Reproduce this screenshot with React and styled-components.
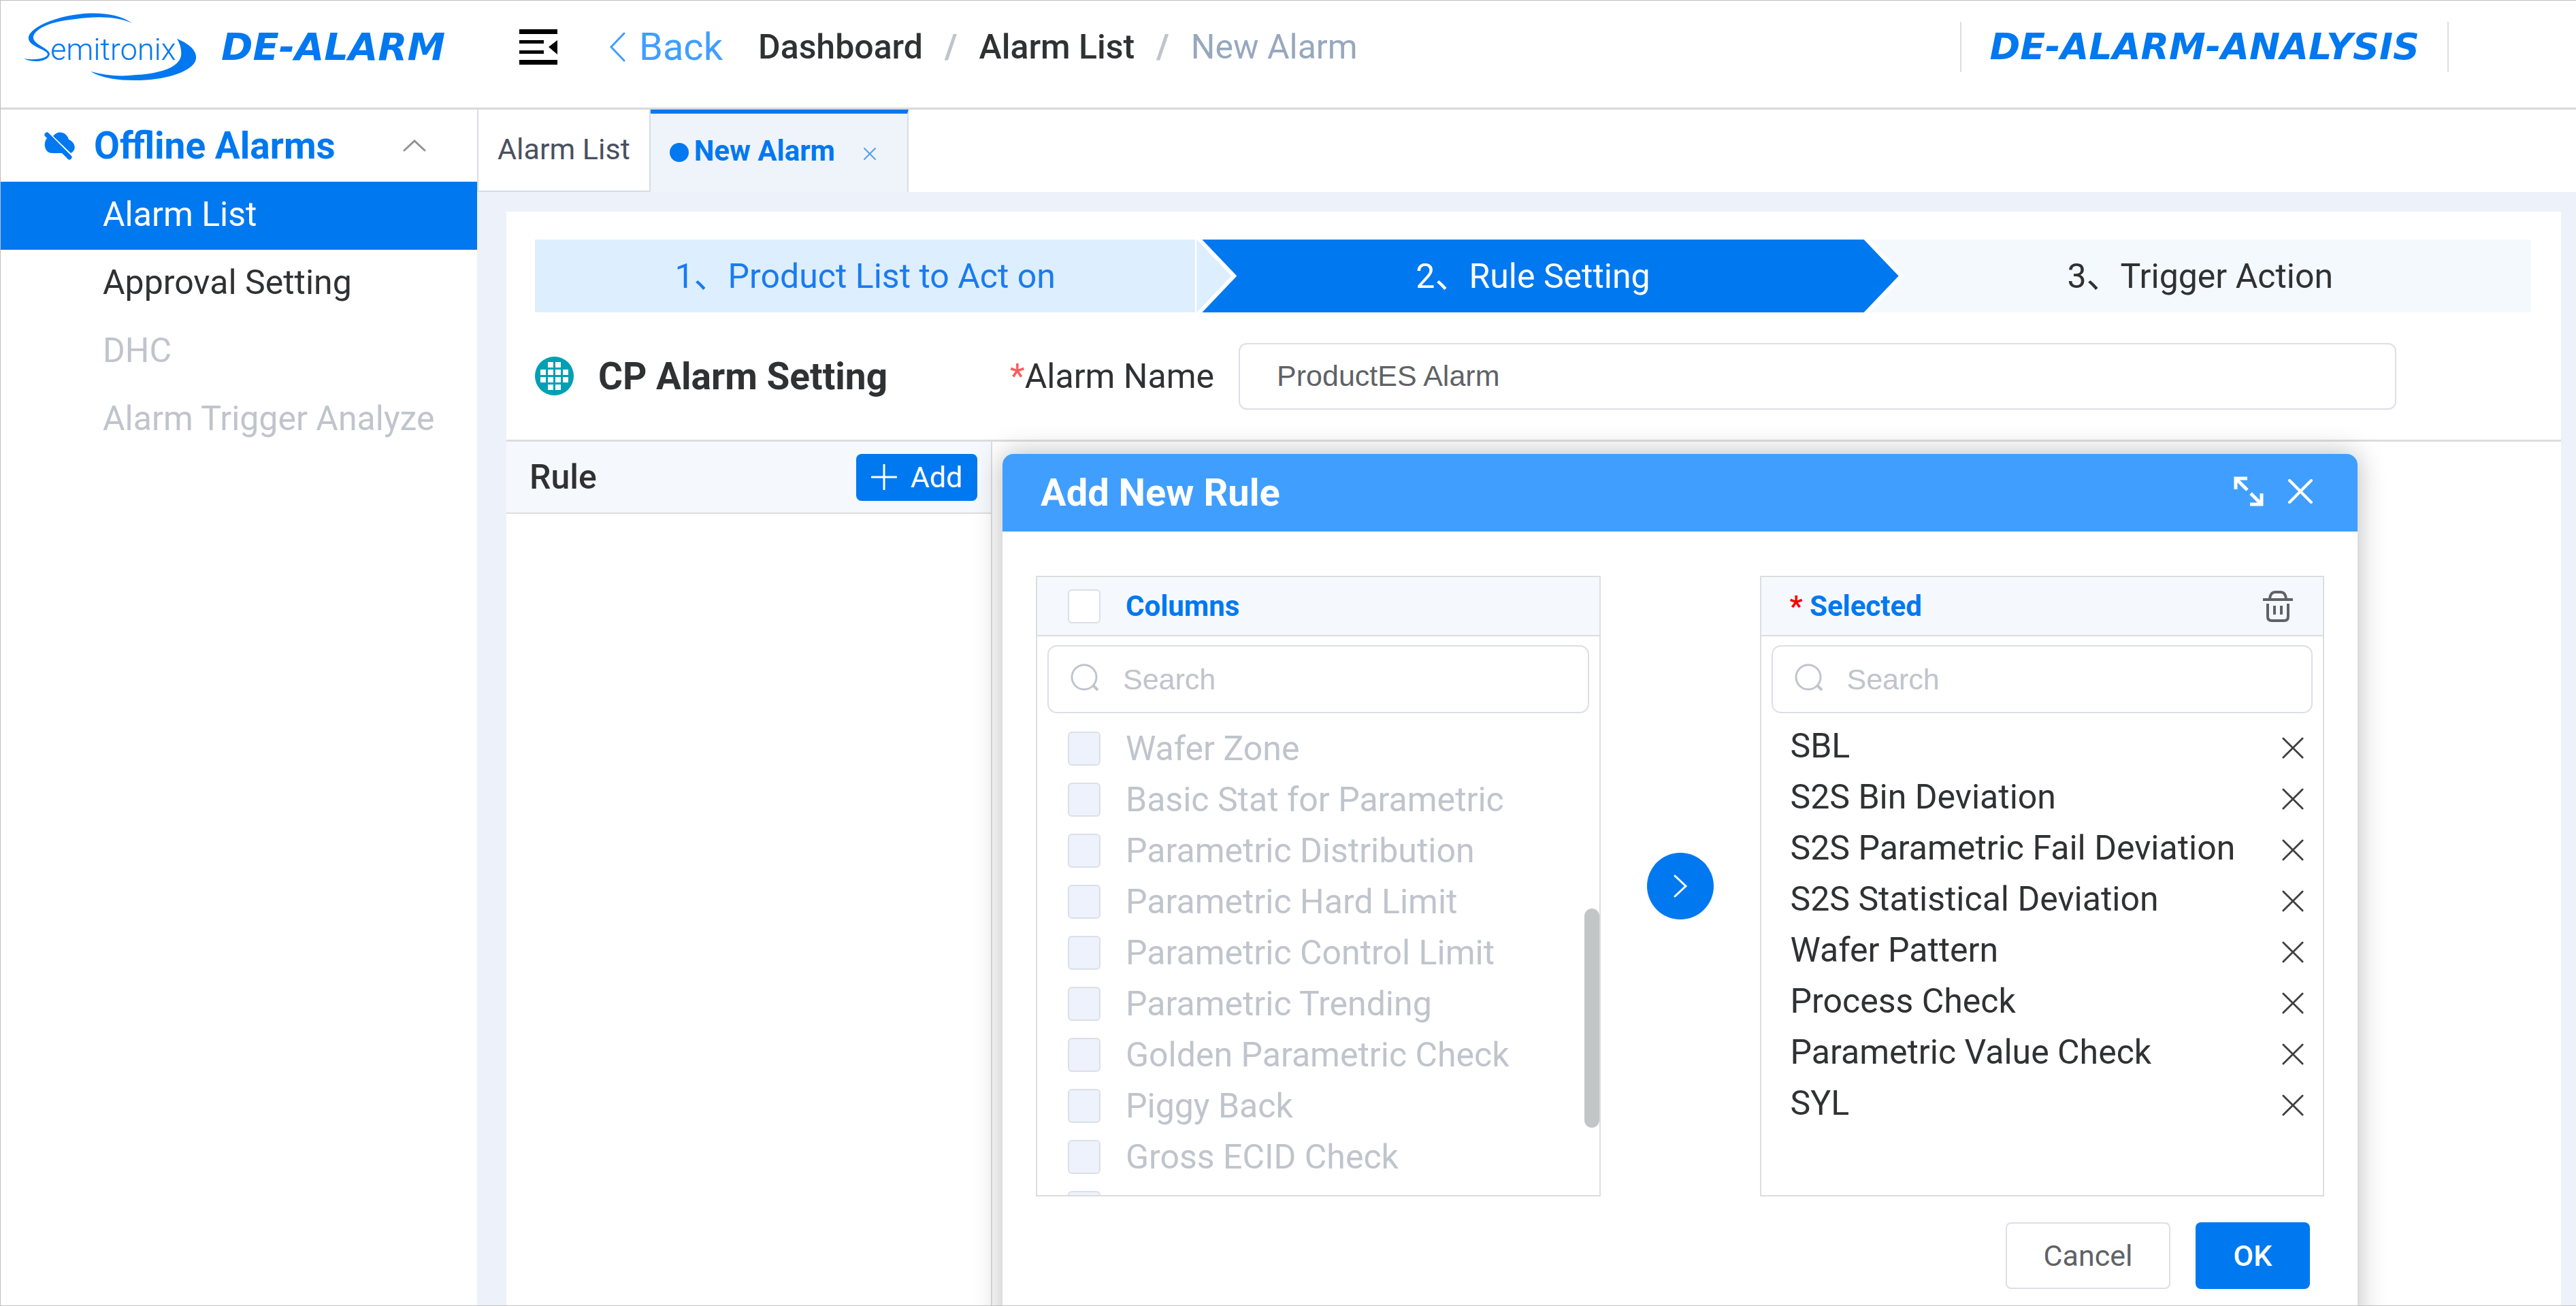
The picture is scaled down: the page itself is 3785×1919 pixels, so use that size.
import React, { useState } from 'react';
import styled, { createGlobalStyle, css } from 'styled-components';

const GlobalStyle = createGlobalStyle`
  * {
    box-sizing: border-box;
  }
  body {
    margin: 0;
    background: #ffffff;
    color: #303133;
    font-family: Roboto, 'Noto Sans CJK SC', sans-serif;
    font-size: 50px;
    line-height: 60px;
  }
  button, input {
    font: inherit;
    color: inherit;
  }
  button {
    display: inline-flex;
    align-items: center;
    justify-content: center;
    padding: 0;
    border: 0;
    background: none;
    cursor: pointer;
  }
  a {
    color: inherit;
    text-decoration: none;
  }
  svg {
    display: block;
    flex: none;
  }
  h1, h2, h3, ul, ol {
    margin: 0;
    padding: 0;
    list-style: none;
  }
`;

const Page = styled.div`
  display: flex;
  flex-direction: column;
  height: 100vh;
  overflow: hidden;
  border: solid #bfbfbf;
  border-width: 1px 0 1px 1px;
`;

const Header = styled.header`
  display: flex;
  align-items: center;
  flex: none;
  height: 160px;
  padding: 0 187px 22px 34px;
  border-bottom: 3px solid #d9d9d9;
`;

const Brand = styled.div`
  display: flex;
  align-items: center;
  gap: 36px;
  width: 728px;
`;

const ProductName = styled.span`
  color: #0078f0;
  font-family: 'DejaVu Sans', sans-serif;
  font-size: ${({ $small }) => ($small ? 54 : 56)}px;
  font-weight: 700;
  font-style: italic;
  white-space: nowrap;
`;

const BackLink = styled.a`
  display: flex;
  align-items: center;
  gap: 20px;
  margin: 0 52px 0 76px;
  color: #409eff;
  font-size: 56px;
`;

const Breadcrumb = styled.ol`
  display: flex;
  white-space: nowrap;
`;

const Crumb = styled.li`
  color: ${({ $current }) => ($current ? '#97a8be' : '#303133')};
  font-weight: ${({ $current }) => ($current ? 400 : 500)};

  &:not(:first-child)::before {
    content: '/';
    margin: 0 32px;
    color: #c0c4cc;
    font-weight: 700;
  }
`;

const AnalysisLink = styled.a`
  display: flex;
  align-items: center;
  height: 74px;
  margin-left: auto;
  padding: 0 41px;
  border: solid #dddddd;
  border-width: 0 2px;
`;

const Body = styled.div`
  display: flex;
  flex: 1;
  min-height: 0;
`;

const Sidebar = styled.nav`
  flex: none;
  width: 700px;
`;

const MenuTitle = styled.button`
  width: 100%;
  height: 106px;
  padding: 0 75px 0 63px;
  color: #0078f0;
  font-size: 55px;
  font-weight: 700;

  span {
    flex: 1;
    margin-left: 26px;
    text-align: left;
  }
`;

const MenuItem = styled.a`
  display: flex;
  align-items: center;
  height: 100px;
  padding: 0 0 4px 150px;
  ${({ $active }) => $active && css`
    background: #0078f0;
    color: #ffffff;
  `}
  ${({ $disabled }) => $disabled && css`
    color: #c0c4cc;
  `}
`;

const Main = styled.main`
  display: flex;
  flex-direction: column;
  flex: 1;
  min-width: 0;
  background: #ecf1fa;
`;

const TabBar = styled.div`
  display: flex;
  flex: none;
  height: 121px;
  background: #ffffff;
  border-left: 2px solid #d8dce5;
`;

const Tab = styled.button`
  height: 121px;
  padding: 0 28px 4px;
  border-right: 2px solid #d8dce5;
  border-bottom: 2px solid #d8dce5;
  color: #495060;
  font-size: 43px;
  ${({ $active }) => $active && css`
    padding: 0 46px 5px 28px;
    border-top: 6px solid #0078f0;
    border-bottom: 0;
    background: #eff4fb;
    color: #0078f0;
    font-size: 42px;
    font-weight: 700;
  `}

  i {
    width: 28px;
    height: 28px;
    margin: 3px 8px 0 0;
    border-radius: 50%;
    background: #0078f0;
  }
  svg {
    margin: 8px 0 0 42px;
  }
`;

const Panel = styled.section`
  display: flex;
  flex-direction: column;
  flex: 1;
  min-height: 0;
  margin: 29px 22px 0 43px;
  background: #ffffff;
`;

const Steps = styled.ol`
  display: grid;
  grid-template-columns: repeat(3, 1fr);
  gap: 8px;
  flex: none;
  margin: 41px 44px 0 42px;
`;

const stepColors = {
  done: ['#ddeeff', '#1a7bf0'],
  current: ['#0078f0', '#ffffff'],
  waiting: ['#f4f9fe', '#303133'],
};

/* The arrow head of a step lies over the start of the next one. */
const Step = styled.li`
  position: relative;
  display: flex;
  align-items: center;
  justify-content: center;
  height: 107px;
  background: ${({ $state }) => stepColors[$state][0]};
  color: ${({ $state }) => stepColors[$state][1]};
  white-space: nowrap;
  ${({ $state }) => $state === 'done' && css`
    border-right: 2px solid #ffffff;
  `}

  &:not(:last-child)::before,
  &:not(:last-child)::after {
    content: '';
    position: absolute;
    z-index: 1;
    top: 0;
    bottom: 0;
    left: ${({ $state }) => ($state === 'done' ? 'calc(100% + 2px)' : '100%')};
  }
  &:not(:last-child)::before {
    width: 59px;
    background: #ffffff;
    clip-path: polygon(0 0, 8px 0, 100% 50%, 8px 100%, 0 100%);
  }
  &:not(:last-child)::after {
    width: 51px;
    background: inherit;
    clip-path: polygon(0 0, 100% 50%, 0 100%);
  }
`;

const SettingRow = styled.div`
  display: flex;
  align-items: center;
  flex: none;
  height: 187px;
  padding: 0 242px 0 42px;
  white-space: nowrap;
`;

const SettingTitle = styled.h1`
  margin: 0 180px 0 36px;
  font-size: 55px;
  font-weight: 700;
`;

const Required = styled.span`
  color: ${({ $strong }) => ($strong ? '#f50000' : '#ff5b5b')};
`;

const NameInput = styled.input`
  flex: 1;
  min-width: 0;
  height: 98px;
  margin-left: 36px;
  padding: 0 54px;
  border: 2px solid #dcdfe6;
  border-radius: 12px;
  color: #606266;
  font-family: 'Liberation Sans', sans-serif;
  font-size: 43px;
`;

const Workspace = styled.div`
  display: flex;
  flex: 1;
  min-height: 0;
  border-top: 3px solid #dddddd;
`;

const RuleColumn = styled.aside`
  flex: none;
  width: 714px;
  border-right: 2px solid #dddddd;
`;

const RuleHeader = styled.div`
  display: flex;
  align-items: center;
  justify-content: space-between;
  height: 106px;
  padding: 0 20px 0 34px;
  border-bottom: 2px solid #dddddd;
  background: #f5f9fe;

  h2 {
    font-size: 50px;
    font-weight: 500;
  }
`;

const AddButton = styled.button`
  gap: 20px;
  width: 178px;
  height: 69px;
  border-radius: 8px;
  background: #0078f0;
  color: #ffffff;
  font-size: 43px;
`;

const DialogArea = styled.div`
  display: flex;
  flex: 1;
  min-width: 0;
  padding: 18px 299px 0 15px;
`;

const Dialog = styled.div`
  flex: 1;
  min-width: 0;
  height: 1300px;
  border-radius: 16px;
  background: #ffffff;
  box-shadow: 0 0 40px rgba(0, 0, 0, 0.28);
`;

const DialogHeader = styled.div`
  display: flex;
  align-items: center;
  height: 114px;
  padding: 0 66px 0 56px;
  border-radius: 16px 16px 0 0;
  background: #409eff;
  color: #ffffff;

  h2 {
    flex: 1;
    font-size: 56px;
    font-weight: 700;
  }
  button {
    margin-bottom: 4px;
  }
  button + button {
    margin-left: 36px;
  }
`;

const Transfer = styled.div`
  display: grid;
  grid-template-columns: 1fr 234px 1fr;
  padding: 65px 49px 0;
`;

const ListBox = styled.section`
  position: relative;
  height: 912px;
  overflow: hidden;
  border: 2px solid #dddddd;
`;

const ListHeader = styled.div`
  display: flex;
  align-items: center;
  height: 87px;
  padding: 0 43px 0 ${({ $left }) => $left}px;
  border-bottom: 2px solid #dddddd;
  background: #f5f9fe;
  color: #0078f0;
  font-size: 42px;
  font-weight: 700;

  button {
    margin-left: auto;
  }
`;

const SearchBox = styled.label`
  display: flex;
  align-items: center;
  gap: 35px;
  height: 100px;
  margin: 13px 15px 0;
  padding: 0 32px;
  border: 2px solid #dcdfe6;
  border-radius: 14px;

  input {
    flex: 1;
    min-width: 0;
    padding: 0;
    border: 0;
    outline: 0;
    font-family: 'Liberation Sans', sans-serif;
    font-size: 43px;
  }
  input::placeholder {
    color: #c0c4cc;
  }
`;

const CheckLabel = styled.label`
  display: flex;
  align-items: center;
  gap: 37px;
  white-space: nowrap;
`;

const Checkbox = styled.input`
  appearance: none;
  flex: none;
  width: 48px;
  height: 50px;
  margin: 0;
  border: 2px solid #dcdfe6;
  border-radius: 6px;
  background: #ffffff;

  &:disabled {
    background: #edf2fc;
  }
`;

const ColumnList = styled.ul`
  padding: 14px 0 0 45px;
`;

const ColumnRow = styled.li`
  height: 75px;
  color: #c0c4cc;

  label {
    height: 75px;
  }
`;

const ScrollThumb = styled.div`
  position: absolute;
  right: 0;
  bottom: 99px;
  width: 22px;
  height: 322px;
  border-radius: 11px;
  background: #c3c6c7;
`;

const MoveCell = styled.div`
  display: flex;
  align-items: center;
  justify-content: center;
`;

const MoveButton = styled.button`
  width: 98px;
  height: 98px;
  border-radius: 50%;
  background: #0078f0;
`;

const SelectedList = styled.ul`
  padding: 10px 28px 0 43px;
`;

const SelectedRow = styled.li`
  display: flex;
  align-items: center;
  justify-content: space-between;
  height: 75px;
  white-space: nowrap;

  button {
    margin-top: 6px;
  }
`;

const DialogFooter = styled.div`
  display: flex;
  justify-content: flex-end;
  gap: 37px;
  padding: 38px 70px 0;
`;

const FooterButton = styled.button`
  width: ${({ $primary }) => ($primary ? 168 : 242)}px;
  height: 98px;
  border-radius: 8px;
  font-size: 43px;
  ${({ $primary }) => ($primary ? css`
    background: #0078f0;
    color: #ffffff;
    font-weight: 500;
  ` : css`
    border: 2px solid #dcdfe6;
    color: #606266;
  `)}
`;

const crumbs = ['Dashboard', 'Alarm List', 'New Alarm'];

const menu = [
  { name: 'Alarm List', active: true },
  { name: 'Approval Setting' },
  { name: 'DHC', disabled: true },
  { name: 'Alarm Trigger Analyze', disabled: true },
];

const steps = [
  { text: '1、Product List to Act on', state: 'done' },
  { text: '2、Rule Setting', state: 'current' },
  { text: '3、Trigger Action', state: 'waiting' },
];

const columns = [
  'Wafer Zone',
  'Basic Stat for Parametric',
  'Parametric Distribution',
  'Parametric Hard Limit',
  'Parametric Control Limit',
  'Parametric Trending',
  'Golden Parametric Check',
  'Piggy Back',
  'Gross ECID Check',
  '',
];

const initialSelected = [
  'SBL',
  'S2S Bin Deviation',
  'S2S Parametric Fail Deviation',
  'S2S Statistical Deviation',
  'Wafer Pattern',
  'Process Check',
  'Parametric Value Check',
  'SYL',
];

function Logo() {
  return (
    <svg width="254" height="100" viewBox="0 0 254 100" role="img" aria-label="Semitronix">
      <g fill="#0078f0">
        <path d="M159 15C140 2 112-2 80 2C40 7 5 24 7 38C8 50 36 54 35 61C34 67 15 70 0 67C12 74 36 72 38 61C39 52 12 46 14 35C17 22 42 12 76 9C110 4 140 6 159 15Z" />
        <path d="M225 38C245 46 257 58 252 71C244 88 205 99 163 99C138 99 115 96 98 86C120 92 142 94 165 91C200 89 228 80 231 63C232 54 230 46 225 38Z" />
        <text x="39" y="69" fontFamily="Roboto, sans-serif" fontWeight="300" fontSize="45">emitronix</text>
      </g>
    </svg>
  );
}

function CollapseIcon() {
  return (
    <svg width="56" height="52" viewBox="0 0 56 52">
      <path d="M0 0h56v7H0zM0 16h36v5H0zM0 31h36v5H0zM0 45h56v7H0zM56 16v21L43 26z" fill="#000000" />
    </svg>
  );
}

function CloudOffIcon() {
  return (
    <svg width="48" height="42" viewBox="0 0 48 42">
      <path d="M5 10C-1 17 1 32 13 32h18zM14 7C20-2 34 0 37 12C47 16 49 28 40 32z" fill="#0078f0" />
      <path d="M5 5l33 33" stroke="#0078f0" strokeWidth="7" strokeLinecap="round" />
    </svg>
  );
}

function Chevron({ width, height, d, color, stroke = 3 }) {
  return (
    <svg width={width} height={height} viewBox={`0 0 ${width} ${height}`}>
      <path d={d} fill="none" stroke={color} strokeWidth={stroke} strokeLinecap="round" />
    </svg>
  );
}

function CloseIcon({ size, stroke, color }) {
  return (
    <svg width={size} height={size} viewBox="0 0 34 34">
      <path d="M2 2l30 30M32 2L2 32" fill="none" stroke={color} strokeWidth={stroke} strokeLinecap="round" />
    </svg>
  );
}

function ExpandIcon() {
  return (
    <svg width="44" height="44" viewBox="0 0 44 44">
      <path d="M20 3H3v16M4 4l16 16M24 41h17V25M40 40L25 25" fill="none" stroke="#ffffff" strokeWidth="5" />
    </svg>
  );
}

function TrashIcon() {
  return (
    <svg width="46" height="46" viewBox="0 0 46 46">
      <path d="M1 13h44M11 12q1-10 8-10h8q7 0 8 10M8 19v19q0 6 6 6h18q6 0 6-6V19M18 22v13M28 22v13" fill="none" stroke="#606266" strokeWidth="4" />
    </svg>
  );
}

function SearchIcon() {
  return (
    <svg width="42" height="46" viewBox="0 0 42 46">
      <path d="M34 33l6 6" stroke="#c0c4cc" strokeWidth="4" />
      <circle cx="20" cy="20" r="18" fill="none" stroke="#c0c4cc" strokeWidth="3" />
    </svg>
  );
}

function WaferIcon() {
  return (
    <svg width="57" height="57" viewBox="0 0 57 57">
      <circle cx="28.5" cy="28.5" r="28.5" fill="#00a0b4" />
      <path
        d="M19 8h8v8h-8zM30 8h8v8h-8zM8 19h8v8H8zM19 19h8v8h-8zM30 19h8v8h-8zM41 19h8v8h-8zM8 30h8v8H8zM19 30h8v8h-8zM30 30h8v8h-8zM41 30h8v8h-8zM19 41h8v8h-8zM30 41h8v8h-8z"
        fill="#ffffff"
      />
    </svg>
  );
}

function ColumnsBox() {
  return (
    <ListBox>
      <ListHeader $left={45}>
        <CheckLabel>
          <Checkbox type="checkbox" />
          Columns
        </CheckLabel>
      </ListHeader>
      <SearchBox>
        <SearchIcon />
        <input type="text" placeholder="Search" aria-label="Search columns" />
      </SearchBox>
      <ColumnList>
        {columns.map((name) => (
          <ColumnRow key={name}>
            <CheckLabel>
              <Checkbox type="checkbox" disabled />
              {name}
            </CheckLabel>
          </ColumnRow>
        ))}
      </ColumnList>
      <ScrollThumb />
    </ListBox>
  );
}

function SelectedBox() {
  const [selected, setSelected] = useState(initialSelected);

  return (
    <ListBox>
      <ListHeader $left={42}>
        <span>
          <Required $strong>*</Required> Selected
        </span>
        <button type="button" aria-label="Clear selected" onClick={() => setSelected([])}>
          <TrashIcon />
        </button>
      </ListHeader>
      <SearchBox>
        <SearchIcon />
        <input type="text" placeholder="Search" aria-label="Search selected" />
      </SearchBox>
      <SelectedList>
        {selected.map((name) => (
          <SelectedRow key={name}>
            {name}
            <button
              type="button"
              aria-label={`Remove ${name}`}
              onClick={() => setSelected(selected.filter((item) => item !== name))}
            >
              <CloseIcon size={32} stroke={3} color="#404040" />
            </button>
          </SelectedRow>
        ))}
      </SelectedList>
    </ListBox>
  );
}

function App() {
  const [alarmName, setAlarmName] = useState('ProductES Alarm');

  return (
    <Page>
      <GlobalStyle />
      <Header>
        <Brand>
          <Logo />
          <ProductName>DE-ALARM</ProductName>
        </Brand>
        <button type="button" aria-label="Collapse menu">
          <CollapseIcon />
        </button>
        <BackLink href="#back">
          <Chevron width={24} height={44} d="M22 2L3 22L22 42" color="#409eff" />
          Back
        </BackLink>
        <Breadcrumb>
          {crumbs.map((name, index) => (
            <Crumb key={name} $current={index === crumbs.length - 1}>{name}</Crumb>
          ))}
        </Breadcrumb>
        <AnalysisLink href="#analysis">
          <ProductName $small>DE-ALARM-ANALYSIS</ProductName>
        </AnalysisLink>
      </Header>
      <Body>
        <Sidebar>
          <MenuTitle type="button">
            <CloudOffIcon />
            <span>Offline Alarms</span>
            <Chevron width={34} height={18} d="M2 16L17 2L32 16" color="#909399" />
          </MenuTitle>
          {menu.map(({ name, active, disabled }) => (
            <MenuItem key={name} href="#menu" $active={active} $disabled={disabled}>{name}</MenuItem>
          ))}
        </Sidebar>
        <Main>
          <TabBar>
            <Tab type="button">Alarm List</Tab>
            <Tab type="button" $active>
              <i />
              New Alarm
              <CloseIcon size={18} stroke={4} color="#5a9ff0" />
            </Tab>
          </TabBar>
          <Panel>
            <Steps>
              {steps.map(({ text, state }) => (
                <Step key={text} $state={state}>{text}</Step>
              ))}
            </Steps>
            <SettingRow>
              <WaferIcon />
              <SettingTitle>CP Alarm Setting</SettingTitle>
              <label htmlFor="alarm-name">
                <Required>*</Required>Alarm Name
              </label>
              <NameInput
                id="alarm-name"
                type="text"
                value={alarmName}
                onChange={(event) => setAlarmName(event.target.value)}
              />
            </SettingRow>
            <Workspace>
              <RuleColumn>
                <RuleHeader>
                  <h2>Rule</h2>
                  <AddButton type="button">
                    <Chevron width={38} height={38} d="M19 1V37M1 19H37" color="#ffffff" />
                    Add
                  </AddButton>
                </RuleHeader>
              </RuleColumn>
              <DialogArea>
                <Dialog role="dialog" aria-label="Add New Rule">
                  <DialogHeader>
                    <h2>Add New Rule</h2>
                    <button type="button" aria-label="Expand">
                      <ExpandIcon />
                    </button>
                    <button type="button" aria-label="Close">
                      <CloseIcon size={36} stroke={4} color="#ffffff" />
                    </button>
                  </DialogHeader>
                  <Transfer>
                    <ColumnsBox />
                    <MoveCell>
                      <MoveButton type="button" aria-label="Move to selected">
                        <Chevron width={22} height={36} d="M3 3L19 18L3 33" color="#ffffff" />
                      </MoveButton>
                    </MoveCell>
                    <SelectedBox />
                  </Transfer>
                  <DialogFooter>
                    <FooterButton type="button">Cancel</FooterButton>
                    <FooterButton type="button" $primary>OK</FooterButton>
                  </DialogFooter>
                </Dialog>
              </DialogArea>
            </Workspace>
          </Panel>
        </Main>
      </Body>
    </Page>
  );
}

export default App;
